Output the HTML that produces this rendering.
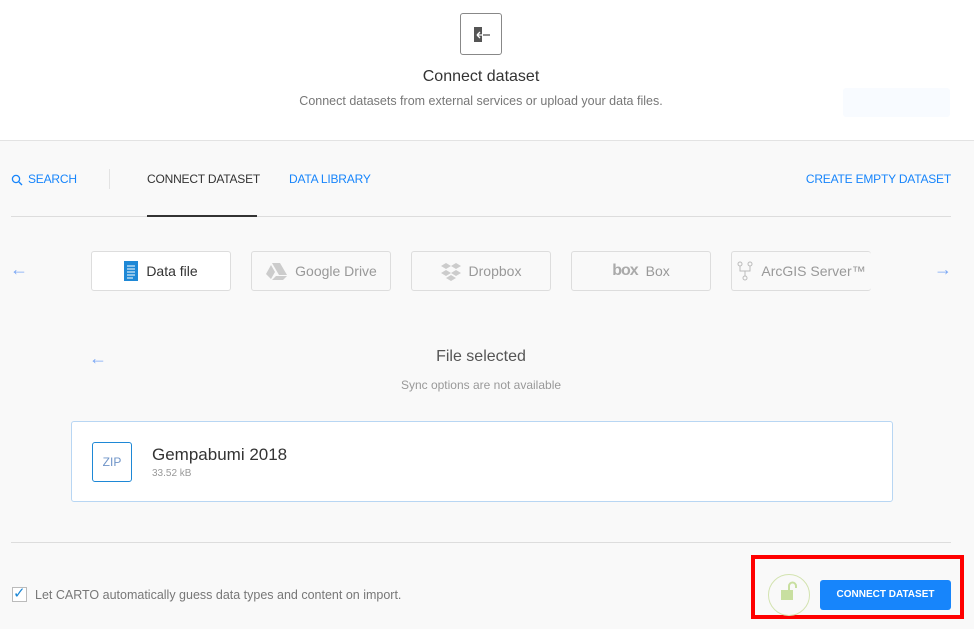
<!DOCTYPE html>
<html><head><style>
*{box-sizing:border-box;margin:0;padding:0}
body{width:974px;height:629px;position:relative;background:#f9f9f9;font-family:"Liberation Sans",sans-serif;overflow:hidden}
.top{position:absolute;left:0;top:0;width:974px;height:141px;background:#fff;border-bottom:1px solid #e3e3e3}
.a{position:absolute;white-space:nowrap}
.tab{font-size:12px;color:#1785fb;top:172px;letter-spacing:-0.2px}
.svc{position:absolute;top:251px;width:140px;height:40px;border:1px solid #ddd;border-radius:3px;font-size:14px;color:#999;display:flex;align-items:center;justify-content:center;gap:8px}
</style></head><body>
<div class="top">
 <div class="a" style="left:460px;top:13px;width:42px;height:42px;border:1px solid #888;border-radius:3px;background:#fff">
  <div style="position:absolute;left:13px;top:13px;width:8px;height:15px;background:#555"></div>
  <svg style="position:absolute;left:14px;top:16px" width="16" height="10"><path d="M2 5H15M2 5L5 2M2 5L5 8" stroke="#fff" stroke-width="1.3" fill="none"/><path d="M8 5H15" stroke="#555" stroke-width="1.3"/></svg>
 </div>
 <div class="a" style="left:0;width:962px;top:68px;text-align:center;font-size:16px;color:#333">Connect dataset</div>
 <div class="a" style="left:0;width:962px;top:94px;text-align:center;font-size:12.5px;color:#777">Connect datasets from external services or upload your data files.</div>
 <div class="a" style="left:843px;top:88px;width:107px;height:29px;background:#f8fbff;border-radius:3px"></div>
</div>
<svg class="a" style="left:11px;top:174px" width="12" height="12"><circle cx="5" cy="5" r="3.6" stroke="#1785fb" stroke-width="1.3" fill="none"/><path d="M8 8L11 11" stroke="#1785fb" stroke-width="1.4"/></svg>
<div class="a tab" style="left:28px">SEARCH</div>
<div class="a" style="left:109px;top:169px;width:1px;height:20px;background:#e3e3e3"></div>
<div class="a tab" style="left:147px;color:#333">CONNECT DATASET</div>
<div class="a tab" style="left:289px">DATA LIBRARY</div>
<div class="a tab" style="right:23px">CREATE EMPTY DATASET</div>
<div class="a" style="left:11px;top:216px;width:940px;height:1px;background:#ddd"></div>
<div class="a" style="left:147px;top:215px;width:110px;height:2px;background:#333"></div>
<div class="a" style="left:10px;top:259px;font-size:18px;color:#7aa7f5">←</div>
<div class="a" style="left:934px;top:259px;font-size:18px;color:#7aa7f5">→</div>
<div class="svc" style="left:91px;background:#fff;color:#333"><svg width="14" height="20"><rect width="14" height="20" fill="#1e88d6"/><path d="M3 5H11M3 8H11M3 11H11M3 14H11M3 17H9" stroke="#fff" stroke-width="1"/></svg>Data file</div>
<div class="svc" style="left:251px"><svg width="22" height="18"><path d="M7 1H15L22 13H14Z M6 3L10 10L6 17L1 12Z M11 14H22L18 18H7Z" fill="#ccc"/></svg>Google Drive</div>
<div class="svc" style="left:411px"><svg width="20" height="20"><path d="M5 2L10 5L5 8L0 5Z M15 2L20 5L15 8L10 5Z M5 9L10 12L5 15L0 12Z M15 9L20 12L15 15L10 12Z M10 14L15 17L10 20L5 17Z" fill="#ccc"/></svg>Dropbox</div>
<div class="svc" style="left:571px"><span style="font-weight:bold;color:#aaa;font-size:16px;letter-spacing:-1px">box</span>Box</div>
<div class="svc" style="left:731px;width:140px;border-right:none;overflow:hidden"><svg width="16" height="20"><circle cx="3" cy="3" r="2" stroke="#bbb" fill="none"/><circle cx="13" cy="3" r="2" stroke="#bbb" fill="none"/><circle cx="8" cy="17" r="2" stroke="#bbb" fill="none"/><path d="M3 5V10H13V5M8 10V15" stroke="#bbb" fill="none"/></svg>ArcGIS Server™</div>
<div class="a" style="left:89px;top:348px;font-size:18px;color:#7aa7f5">←</div>
<div class="a" style="left:0;width:962px;top:348px;text-align:center;font-size:16px;color:#555">File selected</div>
<div class="a" style="left:0;width:962px;top:378px;text-align:center;font-size:12px;color:#999">Sync options are not available</div>
<div class="a" style="left:71px;top:421px;width:822px;height:81px;background:#fff;border:1px solid #b8d6f3;border-radius:3px"></div>
<div class="a" style="left:92px;top:442px;width:40px;height:40px;border:1px solid #1e88d6;border-radius:3px;font-size:12px;color:#6f94c8;text-align:center;line-height:38px">ZIP</div>
<div class="a" style="left:152px;top:445px;font-size:17px;color:#333">Gempabumi 2018</div>
<div class="a" style="left:152px;top:468px;font-size:10px;color:#999">33.52 kB</div>
<div class="a" style="left:11px;top:542px;width:940px;height:1px;background:#ddd"></div>
<div class="a" style="left:12px;top:587px;width:15px;height:15px;border:1px solid #bbb;background:#fff"></div>
<div class="a" style="left:13px;top:584px;font-size:15px;color:#1e88d6">✓</div>
<div class="a" style="left:35px;top:588px;font-size:12.5px;color:#777">Let CARTO automatically guess data types and content on import.</div>
<div class="a" style="left:751px;top:555px;width:213px;height:64px;border:4px solid #f00"></div>
<div class="a" style="left:768px;top:574px;width:42px;height:42px;border:1px solid #d3e3b0;border-radius:50%"></div>
<div class="a" style="left:781px;top:590px;width:12px;height:10px;background:#c8dfa0"></div>
<svg class="a" style="left:786px;top:581px" width="14" height="10"><path d="M3 9V5A3.5 3.5 0 0 1 10 5V7" stroke="#c8dfa0" stroke-width="2" fill="none"/></svg>
<div class="a" style="left:820px;top:580px;width:131px;height:30px;background:#1785fb;border-radius:3px;color:#fff;font-size:10px;font-weight:bold;text-align:center;line-height:30px">CONNECT DATASET</div>
</body></html>
